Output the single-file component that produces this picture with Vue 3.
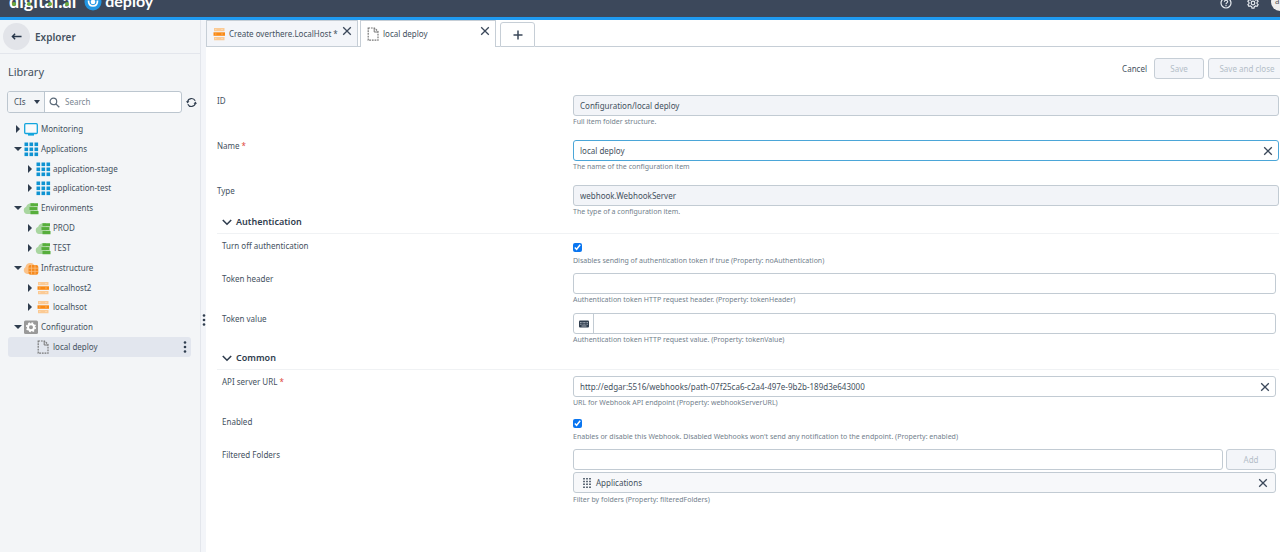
<script setup>
import { ref } from 'vue'

const tree = [
  { label: 'Monitoring', level: 0, state: 'closed', icon: 'monitor' },
  { label: 'Applications', level: 0, state: 'open', icon: 'apps' },
  { label: 'application-stage', level: 1, state: 'closed', icon: 'apps' },
  { label: 'application-test', level: 1, state: 'closed', icon: 'apps' },
  { label: 'Environments', level: 0, state: 'open', icon: 'env' },
  { label: 'PROD', level: 1, state: 'closed', icon: 'env' },
  { label: 'TEST', level: 1, state: 'closed', icon: 'env' },
  { label: 'Infrastructure', level: 0, state: 'open', icon: 'infra' },
  { label: 'localhost2', level: 1, state: 'closed', icon: 'host' },
  { label: 'localhsot', level: 1, state: 'closed', icon: 'host' },
  { label: 'Configuration', level: 0, state: 'open', icon: 'config' },
  { label: 'local deploy', level: 1, state: 'leaf', icon: 'file', selected: true },
]
const cells = [1, 6, 11]
const name = ref('local deploy')
const url = ref('http://edgar:5516/webhooks/path-07f25ca6-c2a4-497e-9b2b-189d3e643000')
const noAuth = ref(true)
const enabled = ref(true)
</script>

<template>
  <div class="page">
    <svg class="defs" aria-hidden="true">
      <symbol id="monitor" viewBox="0 0 16 16">
        <rect x="1.7" y="2.7" width="12.6" height="9.8" rx="1" fill="#fff" fill-opacity=".5" stroke="#12a5dd" stroke-width="1.3" />
        <path d="M5 13h6v1.6H5z" fill="#12a5dd" />
      </symbol>
      <symbol id="apps" viewBox="0 0 16 16">
        <template v-for="y in cells" :key="y">
          <rect v-for="x in cells" :key="x" :x="x + 0.5" :y="y + 0.5" width="3.6" height="3.6" fill="#0e93d2" />
        </template>
      </symbol>
      <symbol id="env" viewBox="0 0 16 16">
        <path d="M4 14a3.800 3.800 0 0 1-.8-7.300C4 4.200 6.500 3 9 3h2v11z" fill="#a9d6a0" />
        <path d="M7.500 3.200h7.500v3H7.500zM6.500 7.100h8v3h-8zM7.500 11h8v3.200h-8z" fill="#57ae3c" />
        <path d="M7 6.600h8M7 10.500h8" stroke="#a9d6a0" stroke-width=".8" />
      </symbol>
      <symbol id="infra" viewBox="0 0 16 16">
        <path d="M4 14a3.800 3.800 0 0 1-1.500-7C3 4 5.500 2.500 8 3c2 .2 3 1.500 3.500 3v8z" fill="#fbc38a" />
        <rect x="5.500" y="5" width="9.800" height="9.800" rx="2" fill="#f68b1f" />
        <path d="M8.500 5v9.500M12 5v9.500M5.500 8.200H15M5.500 11.400H15" stroke="#fbc38a" stroke-width=".7" />
      </symbol>
      <symbol id="host" viewBox="0 0 16 16">
        <path d="M3 2h10.500v3.200H3zM3 11h10.500v3.200H3z" fill="#fbca94" />
        <path d="M2.500 6.300H14v3.500H2.500z" fill="#fa8a14" />
        <path d="M4 3.600h1.500M10 3.600h2M4 8h1.500M10 8h2M4 12.600h1.500M10 12.600h2" stroke="#fff" stroke-opacity=".5" stroke-width=".6" />
      </symbol>
      <symbol id="config" viewBox="0 0 16 16">
        <rect x="1" y="1.500" width="14" height="13.500" rx="1.500" fill="#999" />
        <circle cx="8" cy="8.200" r="3" fill="none" stroke="#fff" stroke-width="2" />
        <circle cx="8" cy="8.200" r="4.300" fill="none" stroke="#fff" stroke-width="1.600" stroke-dasharray="1.700 1.677" />
      </symbol>
      <symbol id="file" viewBox="0 0 16 16">
        <path d="M3.200 2h6.300L13 5.500v8.700H3.200z" fill="none" stroke="#777" stroke-width="1.200" stroke-dasharray="1.800 .9" />
        <path d="M9.200 2v4H13" fill="none" stroke="#777" />
      </symbol>
      <symbol id="cross" viewBox="0 0 10 10">
        <path d="M1.200 1.200l7.600 7.600M8.800 1.200L1.200 8.800" stroke="#3b485a" stroke-width="1.300" fill="none" />
      </symbol>
      <symbol id="chevron" viewBox="0 0 10 10">
        <path d="M.8 3l4.200 4.200L9.200 3" stroke="#2f3d4e" stroke-width="1.600" fill="none" />
      </symbol>
      <symbol id="dots" viewBox="0 0 4 12">
        <circle cx="2" cy="1.500" r="1.300" /><circle cx="2" cy="6" r="1.300" /><circle cx="2" cy="10.500" r="1.300" />
      </symbol>
    </svg>

    <header class="top">
      <span class="brand"><i>d</i>i<i>g</i>it<i>a</i>l.<i>a</i>i</span>
      <svg class="mark" viewBox="0 0 18 18" aria-hidden="true">
        <circle cx="9" cy="9" r="8.500" fill="#2196e3" />
        <circle cx="9" cy="9" r="2.300" fill="#fff" />
        <path d="M4.500 7.500c0 3.300 1.800 5.500 4.500 5.500s4.500-2.200 4.500-5.500" fill="none" stroke="#fff" stroke-width="1.700" />
      </svg>
      <span class="product">deploy</span>
      <button class="ghost help" aria-label="Help">
        <svg viewBox="0 0 12 12"><circle cx="6" cy="6" r="5" fill="none" stroke="#e6eaef" stroke-width="1.200" /><path d="M4.400 4.800c0-2.200 3.300-2 3.200-.1C7.600 5.900 6 5.900 6 7.200M6 8v1.200" fill="none" stroke="#e6eaef" stroke-width="1.200" /></svg>
      </button>
      <button class="ghost gear" aria-label="Settings">
        <svg viewBox="0 0 12 12"><path d="M5 .8h2l.4 1.500 1.200.7 1.500-.4 1 1.700L10 5.400v1.200l1.100 1.100-1 1.700-1.500-.4-1.200.7L7 11.200H5l-.4-1.500L3.400 9l-1.500.4-1-1.700L2 6.600V5.400L.9 4.300l1-1.700 1.500.4 1.200-.7z" fill="none" stroke="#e6eaef" stroke-width="1.200" /><circle cx="6" cy="6" r="1.800" fill="none" stroke="#e6eaef" stroke-width="1.200" /></svg>
      </button>
      <span class="avatar">a</span>
    </header>

    <div class="body">
      <aside class="side">
        <div class="explorer">
          <button class="back" aria-label="Back">
            <svg viewBox="0 0 12 12"><path d="M11.500 6H1.500M4.500 3L1.500 6l3 3" fill="none" stroke="#26364a" stroke-width="1.500" /></svg>
          </button>
          <strong>Explorer</strong>
        </div>
        <h2>Library</h2>
        <div class="searchrow">
          <div class="searchbox">
            <button class="cis">CIs<i class="down"></i></button>
            <label class="search">
              <svg viewBox="0 0 12 12" aria-hidden="true"><circle cx="4.800" cy="4.800" r="3.600" fill="none" stroke="#5d6b7a" stroke-width="1.300" /><path d="M7.500 7.500l3.700 3.700" stroke="#5d6b7a" stroke-width="1.500" /></svg>
              <input type="text" placeholder="Search" aria-label="Search" />
            </label>
          </div>
          <button class="ghost refresh" aria-label="Refresh">
            <svg viewBox="0 0 12 12"><path d="M1.700 5.200A4.400 4.400 0 0 1 10 4.200M10.300 6.800A4.400 4.400 0 0 1 2 7.800" fill="none" stroke="#2f3d4e" stroke-width="1.300" /><path d="M0 4.600h3.800L1.700 7zM12 7.400H8.200L10.300 5z" fill="#2f3d4e" /></svg>
          </button>
        </div>
        <ul class="tree">
          <li v-for="n in tree" :key="n.label" :class="['node', 'l' + n.level, { selected: n.selected }]">
            <i :class="['arrow', n.state]"></i>
            <svg class="nicon" aria-hidden="true"><use :href="'#' + n.icon" /></svg>
            <span>{{ n.label }}</span>
            <button v-if="n.selected" class="ghost more" aria-label="More"><svg><use href="#dots" /></svg></button>
          </li>
        </ul>
      </aside>
      <div class="split"><svg><use href="#dots" /></svg></div>

      <main class="main">
        <nav class="tabs">
          <div class="tab inactive">
            <svg class="nicon" aria-hidden="true"><use href="#host" /></svg><span>Create overthere.LocalHost *</span>
            <button class="ghost x" aria-label="Close tab"><svg><use href="#cross" /></svg></button>
          </div>
          <div class="gap thin"></div>
          <div class="tab active">
            <svg class="nicon" aria-hidden="true"><use href="#file" /></svg><span>local deploy</span>
            <button class="ghost x" aria-label="Close tab"><svg><use href="#cross" /></svg></button>
          </div>
          <div class="gap"></div>
          <button class="add-tab" aria-label="New tab">
            <svg viewBox="0 0 10 10"><path d="M5 .5v9M.5 5h9" stroke="#3b485a" stroke-width="1.500" /></svg>
          </button>
          <div class="rest"></div>
        </nav>

        <div class="actions">
          <button class="ghost cancel">Cancel</button>
          <button class="btn save" disabled>Save</button>
          <button class="btn close" disabled>Save and close</button>
        </div>

        <form class="form" @submit.prevent>
          <div class="row tall">
            <label for="id">ID</label>
            <div class="field"><div class="box gray"><input id="id" type="text" value="Configuration/local deploy" readonly /></div><small>Full item folder structure.</small></div>
          </div>
          <div class="row tall">
            <label for="name">Name<b>*</b></label>
            <div class="field"><div class="box focus"><input id="name" v-model="name" type="text" /><button type="button" class="ghost clear" aria-label="Clear name" @click="name = ''"><svg><use href="#cross" /></svg></button></div><small>The name of the configuration item</small></div>
          </div>
          <div class="row type">
            <label for="type">Type</label>
            <div class="field"><div class="box gray"><input id="type" type="text" value="webhook.WebhookServer" readonly /></div><small>The type of a configuration item.</small></div>
          </div>

          <h3><svg aria-hidden="true"><use href="#chevron" /></svg>Authentication</h3>
          <div class="group">
            <div class="row check">
              <label for="noauth">Turn off authentication</label>
              <div class="field"><input id="noauth" v-model="noAuth" type="checkbox" /><small>Disables sending of authentication token if true (Property: noAuthentication)</small></div>
            </div>
            <div class="row">
              <label for="header">Token header</label>
              <div class="field"><div class="box"><input id="header" type="text" /></div><small>Authentication token HTTP request header. (Property: tokenHeader)</small></div>
            </div>
            <div class="row last">
              <label for="value">Token value</label>
              <div class="field">
                <div class="box">
                  <button type="button" class="key" aria-label="Use variable"><svg viewBox="0 0 10 8"><rect y="0.500" width="10" height="7" rx="1" fill="#2f3d4e" /><path d="M1 2.500h8M1 4.200h8" stroke="#c5ccd4" stroke-width=".8" stroke-dasharray=".9 .5" /><path d="M2.500 6h5" stroke="#c5ccd4" stroke-width=".8" /></svg></button>
                  <input id="value" type="text" />
                </div>
                <small>Authentication token HTTP request value. (Property: tokenValue)</small>
              </div>
            </div>
          </div>

          <h3><svg aria-hidden="true"><use href="#chevron" /></svg>Common</h3>
          <div class="group">
            <div class="row">
              <label for="url">API server URL<b>*</b></label>
              <div class="field"><div class="box"><input id="url" v-model="url" type="text" /><button type="button" class="ghost clear" aria-label="Clear URL" @click="url = ''"><svg><use href="#cross" /></svg></button></div><small>URL for Webhook API endpoint (Property: webhookServerURL)</small></div>
            </div>
            <div class="row check">
              <label for="enabled">Enabled</label>
              <div class="field"><input id="enabled" v-model="enabled" type="checkbox" /><small>Enables or disable this Webhook. Disabled Webhooks won't send any notification to the endpoint. (Property: enabled)</small></div>
            </div>
            <div class="row">
              <label for="folders">Filtered Folders</label>
              <div class="field">
                <div class="adder"><div class="box"><input id="folders" type="text" /></div><button type="button" class="btn add" disabled>Add</button></div>
                <div class="box item">
                  <svg class="grip" viewBox="0 0 8 10" aria-hidden="true"><path d="M1 0v10M4 0v10M7 0v10" stroke="#2f3d4e" stroke-width="1.500" stroke-dasharray="1.500 1.300" /></svg>
                  <span>Applications</span>
                  <button type="button" class="ghost clear" aria-label="Remove Applications"><svg><use href="#cross" /></svg></button>
                </div>
                <small>Filter by folders (Property: filteredFolders)</small>
              </div>
            </div>
          </div>
        </form>
      </main>
    </div>
  </div>
</template>

<style>
html,
body {
  margin: 0;
  overflow: hidden;
}
</style>

<style scoped>
* {
  box-sizing: border-box;
}
.page {
  min-height: 100vh;
  display: flex;
  flex-direction: column;
  overflow: hidden;
  background: #fff;
  color: #445160;
  font: 8px/16px "Noto Sans", "Open Sans", sans-serif;
}
.defs {
  position: absolute;
  width: 0;
  height: 0;
}
button,
input {
  font: inherit;
  color: inherit;
  margin: 0;
}
button {
  padding: 0;
}
svg {
  display: block;
  flex: none;
}
.ghost {
  border: 0;
  background: none;
}
.top {
  height: 20px;
  background: #3c485b;
  border-bottom: 3px solid #1f9af0;
  display: flex;
  align-items: flex-end;
  overflow: hidden;
  flex: none;
  padding: 0 0 6px 9px;
  color: #fff;
}
.brand,
.product {
  font: 700 18px/20px Lato, sans-serif;
}
.brand i {
  font-style: normal;
  position: relative;
}
.brand i::after {
  content: "";
  position: absolute;
  left: 3px;
  bottom: 6px;
  width: 4px;
  height: 4px;
  border-radius: 50%;
  background: #6cab3c;
}
.mark {
  width: 18px;
  height: 18px;
  margin: 0 3px 0 8px;
}
.product {
  font-size: 16px;
  flex: 1;
}
.help svg,
.gear svg {
  width: 12px;
  height: 12px;
}
.help,
.gear {
  margin-bottom: 2px;
}
.gear {
  margin-left: 15px;
}
.avatar {
  width: 18px;
  height: 18px;
  border-radius: 9px;
  background: #eee;
  color: #555;
  margin: 0 -9px 0 12px;
  padding-left: 4px;
}
.body {
  flex: 1;
  display: flex;
}
.side {
  width: 201px;
  flex: none;
  background: #f3f5f7;
  border-right: 1px solid #e3e6ec;
}
.explorer {
  height: 34px;
  border-bottom: 1px solid #e3e6ec;
  display: flex;
  align-items: center;
  padding-left: 3px;
  gap: 5px;
}
.back {
  width: 27px;
  height: 27px;
  border: 0;
  border-radius: 50%;
  background: #e2e4e9;
  display: grid;
  place-items: center;
}
.back svg {
  width: 11px;
  height: 11px;
}
.explorer strong {
  font-size: 10px;
  font-weight: 600;
}
h2 {
  margin: 10px 0 11px 8px;
  font-weight: 400;
  font-size: 11px;
  line-height: 16px;
}
.searchrow {
  display: flex;
  align-items: center;
  padding: 0 3px 0 7px;
  gap: 4px;
}
.searchbox {
  flex: 1;
  min-width: 0;
  display: flex;
  height: 22px;
  border: 1px solid #bcc6cf;
  border-radius: 3px;
  background: #fff;
  overflow: hidden;
}
.cis {
  width: 37px;
  border: 0;
  border-right: 1px solid #bcc6cf;
  background: #f3f5f7;
  display: flex;
  align-items: center;
  justify-content: space-between;
  padding: 0 4px 0 6px;
}
.down,
.arrow.open {
  border: 3px solid transparent;
  border-top: 4px solid #2f3d4e;
  border-bottom: 0;
}
.search {
  flex: 1;
  min-width: 0;
  display: flex;
  align-items: center;
  padding-left: 4px;
  gap: 5px;
}
.search svg {
  width: 11px;
  height: 11px;
}
.search input {
  border: 0;
  padding: 0;
  width: 100%;
  outline: 0;
  background: none;
}
.search input::placeholder {
  color: #7b8792;
}
.refresh svg {
  width: 11px;
  height: 11px;
}
.tree {
  list-style: none;
  display: grid;
  grid-auto-rows: 1fr;
  height: 238px;
  margin: 6px 9px 0 8px;
  padding: 0;
}
.node {
  display: flex;
  align-items: center;
  padding-left: 6px;
  border-radius: 3px;
}
.node.l1 {
  padding-left: 18px;
}
.node.selected {
  background: #e2e6ee;
}
.node span {
  flex: 1;
}
.arrow {
  width: 8px;
  flex: none;
}
.arrow.open {
  border-width: 4px 4px 0;
}
.arrow.closed {
  width: 4px;
  margin: 0 2px;
  border: 4px solid transparent;
  border-left: 4px solid #2f3d4e;
  border-right: 0;
}
.nicon {
  width: 16px;
  height: 16px;
  margin: 0 2px 0 1px;
}
.more {
  width: 12px;
  display: grid;
  place-items: center;
}
.more svg,
.split svg {
  width: 4px;
  height: 12px;
  fill: #2f3d4e;
}
.split {
  width: 5px;
  flex: none;
  background: #f3f5f9;
  display: flex;
  align-items: center;
  justify-content: flex-end;
  padding-top: 68px;
}
.main {
  flex: 1;
  min-width: 0;
}
.tabs {
  display: flex;
  height: 27px;
  align-items: stretch;
}
.tab {
  position: relative;
  display: flex;
  align-items: center;
  border: 1px solid #c6ced6;
  padding-left: 3px;
  white-space: nowrap;
}
.inactive {
  width: 152px;
  background: #f3f5f9;
}
.active {
  width: 136px;
  border-bottom: 0;
}
.tab .x {
  position: absolute;
  top: 5px;
  right: 5px;
}
.x svg,
.clear svg {
  width: 10px;
  height: 10px;
}
.gap,
.rest {
  width: 4px;
  border-bottom: 1px solid #c6ced6;
}
.gap.thin {
  width: 2px;
}
.rest {
  flex: 1;
}
.add-tab {
  width: 35px;
  margin-top: 2px;
  border: 1px solid #c6ced6;
  border-radius: 3px 3px 0 0;
  background: #fff;
  display: grid;
  place-items: center;
}
.add-tab svg {
  width: 10px;
  height: 10px;
}
.actions {
  display: flex;
  justify-content: flex-end;
  padding-top: 11px;
  margin-right: -6px;
}
.cancel {
  margin-right: 7px;
}
.btn {
  height: 21px;
  border: 1px solid #c6ced6;
  border-radius: 3px;
  background: #f3f5f9;
  color: #b4bec8;
}
.save {
  width: 50px;
  margin-right: 4px;
}
.close {
  width: 78px;
}
.form {
  padding: 16px 1px 0 11px;
}
.row {
  display: flex;
  justify-content: space-between;
  height: 40px;
}
.row.tall {
  height: 45px;
}
.row.type {
  height: 28px;
}
.row.check {
  height: 33px;
}
.row.last {
  height: 36px;
}
.field {
  width: 706px;
  flex: 0 0 auto;
}
.group .field {
  width: 703px;
}
.group {
  padding: 6px 3px 0 5px;
}
.row b {
  color: #e0483e;
  font-weight: 400;
  padding-left: 2px;
}
.row > label {
  margin-top: -2px;
}
.box {
  height: 21px;
  border: 1px solid #c2cbd3;
  border-radius: 3px;
  display: flex;
  align-items: center;
}
.box.gray {
  background: #f2f4f8;
}
.box.focus {
  border-color: #4ba6d8;
}
.box input {
  flex: 1;
  min-width: 0;
  border: 0;
  background: none;
  padding: 0 6px;
  outline: 0;
}
.clear {
  width: 20px;
  height: 19px;
  display: grid;
  place-items: center;
}
small {
  display: block;
  font-size: 7px;
  line-height: 12px;
  color: #72808c;
}
h3 {
  margin: 0;
  height: 21px;
  display: flex;
  align-items: center;
  padding: 0 0 2px 5px;
  font-size: 9px;
  line-height: 16px;
  font-weight: 600;
  color: #2f3d4e;
  gap: 4px;
  border-bottom: 1px solid #f0f2f4;
}
h3 svg {
  width: 10px;
  height: 10px;
}
.check input {
  display: block;
  width: 9px;
  height: 9px;
  margin: 3px 0;
  accent-color: #0b76f0;
}
.key {
  width: 20px;
  height: 19px;
  border: 0;
  border-right: 1px solid #c2cbd3;
  background: none;
  display: grid;
  place-items: center;
}
.key svg {
  width: 10px;
  height: 8px;
}
.adder {
  display: flex;
  gap: 3px;
}
.adder .box {
  flex: 1;
}
.add {
  width: 50px;
}
.item {
  margin: 2px 0 1px;
  background: #f7f8fa;
  padding: 0 2px 0 9px;
}
.item span {
  flex: 1;
  padding-left: 5px;
}
.grip {
  width: 8px;
  height: 10px;
}
</style>
